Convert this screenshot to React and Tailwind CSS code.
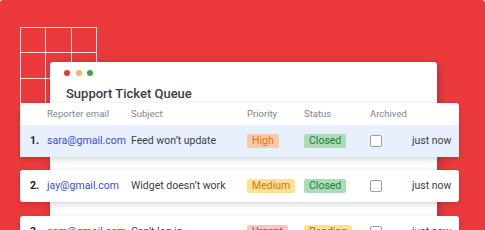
import React from "react";

const cols = {
  num: "w-[17px] shrink-0",
  email: "w-[84px] shrink-0",
  subject: "w-[116px] shrink-0",
  priority: "w-[57px] shrink-0",
  status: "w-[66px] shrink-0",
  archived: "w-[42px] shrink-0",
};

function Badge({ children, cls }) {
  return (
    <span className={`inline-flex h-[14px] items-center rounded-[2px] px-[5px] text-[10.5px] leading-none ${cls}`}>
      {children}
    </span>
  );
}

function Row({ n, email, subject, pr, prCls, st, stCls, highlight }) {
  return (
    <div className={`flex h-[32px] items-center whitespace-nowrap pl-[10px] text-[10.5px] ${highlight ? "bg-[#e8f0fe]" : ""}`}>
      <div className={`${cols.num} font-bold text-[#202124]`}>{n}.</div>
      <div className={`${cols.email} text-[#3b4ce0]`}>{email}</div>
      <div className={`${cols.subject} text-[#3c4043]`}>{subject}</div>
      <div className={cols.priority}>
        <Badge cls={prCls}>{pr}</Badge>
      </div>
      <div className={cols.status}>
        <Badge cls={stCls}>{st}</Badge>
      </div>
      <div className={cols.archived}>
        <div className="h-[12px] w-[12px] rounded-[2px] border border-[#9aa0a6] bg-white" />
      </div>
      <div className="text-[#3c4043]">just now</div>
    </div>
  );
}

export default function App() {
  return (
    <div
      className="relative h-[230px] w-[485px] overflow-hidden rounded-t-[3px] bg-[#ec3a3c]"
      style={{ fontFamily: "Roboto, 'Liberation Sans', sans-serif" }}
    >
      {/* decorative grid */}
      <div className="absolute left-[20px] top-[27px] grid grid-cols-[25px_26px_25px] grid-rows-[25px_26px_25px] border-l-[1.5px] border-t-[1.5px] border-white/85">
        {Array.from({ length: 9 }).map((_, i) => (
          <div key={i} className="border-b-[1.5px] border-r-[1.5px] border-white/85" />
        ))}
      </div>

      {/* main card */}
      <div className="relative ml-[50px] mt-[62px] h-[200px] w-[387px] rounded-[3px] bg-white shadow-[2px_2px_8px_rgba(60,20,80,0.35)]">
        <div className="flex gap-[5.5px] pl-[14px] pt-[8px]">
          <span className="h-[6px] w-[6px] rounded-full bg-[#e53935]" />
          <span className="h-[6px] w-[6px] rounded-full bg-[#f6b55a]" />
          <span className="h-[6px] w-[6px] rounded-full bg-[#43a047]" />
        </div>
        <div className="mt-[9px] pl-[16px] text-[13px] font-medium leading-[18px] text-[#3c4043]">
          Support Ticket Queue
        </div>

        <div className="-ml-[30px] w-[439px]">
          <div className="rounded-[3px] bg-white shadow-[0_2px_6px_rgba(0,0,0,0.18)]">
            <div className="flex h-[22px] items-center whitespace-nowrap pl-[10px] text-[9.5px] text-[#80868b]">
              <div className={cols.num} />
              <div className={cols.email}>Reporter email</div>
              <div className={cols.subject}>Subject</div>
              <div className={cols.priority}>Priority</div>
              <div className={cols.status}>Status</div>
              <div className={cols.archived}>Archived</div>
            </div>
            <Row
              n={1}
              email="sara@gmail.com"
              subject="Feed won’t update"
              pr="High"
              prCls="bg-[#fbc9a7] text-[#e8710a]"
              st="Closed"
              stCls="bg-[#acdbb7] text-[#1e7e3a]"
              highlight
            />
          </div>

          <div className="mt-[13px] rounded-[3px] bg-white shadow-[0_2px_6px_rgba(0,0,0,0.18)]">
            <Row
              n={2}
              email="jay@gmail.com"
              subject="Widget doesn’t work"
              pr="Medium"
              prCls="bg-[#fde293] text-[#e8710a]"
              st="Closed"
              stCls="bg-[#acdbb7] text-[#1e7e3a]"
            />
          </div>

          <div className="mt-[14px] rounded-[3px] bg-white shadow-[0_2px_6px_rgba(0,0,0,0.18)]">
            <Row
              n={3}
              email="sam@gmail.com"
              subject="Can’t log in"
              pr="Urgent"
              prCls="bg-[#f8c6c6] text-[#d93025]"
              st="Pending"
              stCls="bg-[#fde293] text-[#b06000]"
            />
          </div>
        </div>
      </div>
    </div>
  );
}
